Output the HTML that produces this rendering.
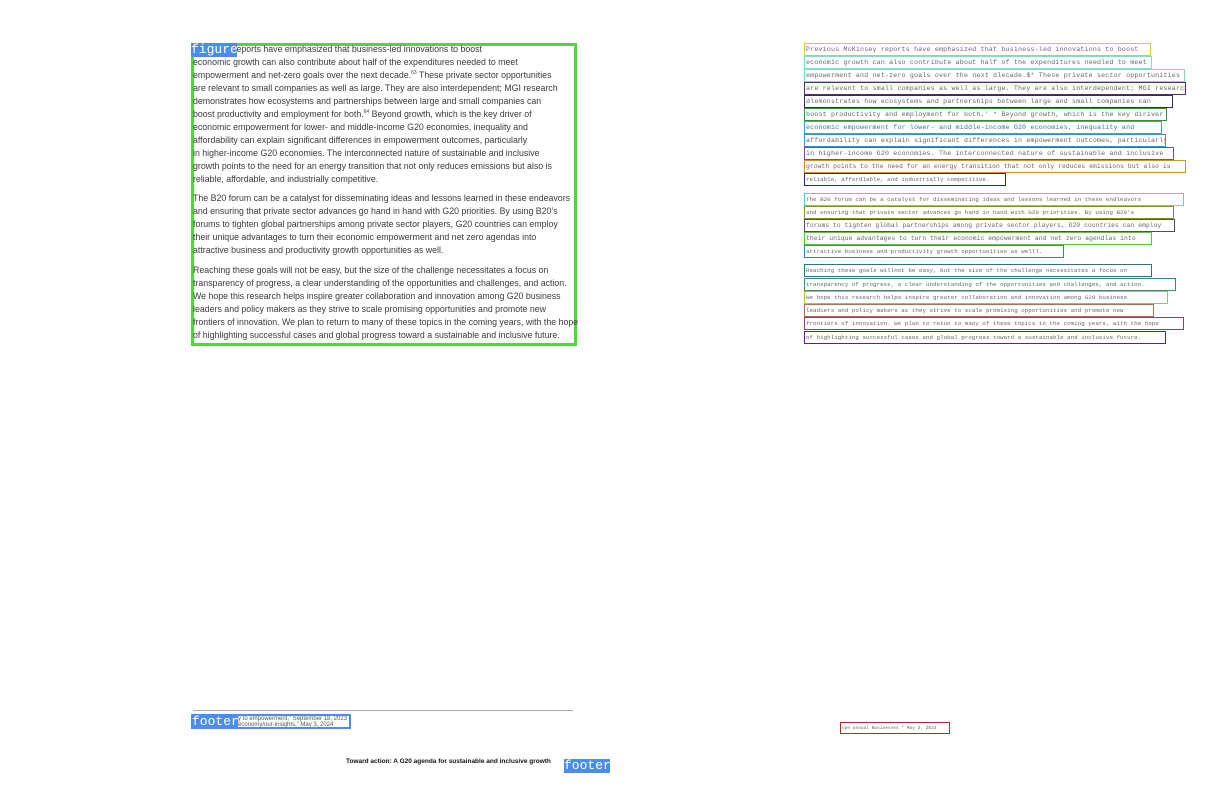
<!DOCTYPE html>
<html><head><meta charset="utf-8"><style>
body{margin:0;width:1224px;height:792px;background:#fff;position:relative;overflow:hidden}
.l{position:absolute;left:193px;font:8.8px/1 "Liberation Sans",sans-serif;color:#3a3a3a;white-space:nowrap}
.r{position:absolute;left:804px;height:13px;border:1px solid;box-sizing:border-box;font:6.6px/11px "Liberation Mono",monospace;letter-spacing:.2px;color:#666;white-space:nowrap;overflow:hidden;padding-left:1px}
.s{font-size:5.8px;letter-spacing:.05px}
.lab{position:absolute;background:#4a8cf0;color:#fff;font:13px/14px "Liberation Mono",monospace}
sup{font-size:5px}
</style></head><body>
<div style="position:absolute;left:191px;top:43px;width:386px;height:303px;border:3px solid #4ed83a;box-sizing:border-box"></div>
<div style="position:absolute;top:0;left:0">
<div class="l" style="top:45px">McKinsey reports have emphasized that business-led innovations to boost</div>
<div class="l" style="top:58px">economic growth can also contribute about half of the expenditures needed to meet</div>
<div class="l" style="top:71px">empowerment and net-zero goals over the next decade.<sup>63</sup> These private sector opportunities</div>
<div class="l" style="top:84px">are relevant to small companies as well as large. They are also interdependent; MGI research</div>
<div class="l" style="top:97px">demonstrates how ecosystems and partnerships between large and small companies can</div>
<div class="l" style="top:110px">boost productivity and employment for both.<sup>64</sup> Beyond growth, which is the key driver of</div>
<div class="l" style="top:123px">economic empowerment for lower- and middle-income G20 economies, inequality and</div>
<div class="l" style="top:136px">affordability can explain significant differences in empowerment outcomes, particularly</div>
<div class="l" style="top:149px">in higher-income G20 economies. The interconnected nature of sustainable and inclusive</div>
<div class="l" style="top:162px">growth points to the need for an energy transition that not only reduces emissions but also is</div>
<div class="l" style="top:175px">reliable, affordable, and industrially competitive.</div>
<div class="l" style="top:194px">The B20 forum can be a catalyst for disseminating ideas and lessons learned in these endeavors</div>
<div class="l" style="top:207px">and ensuring that private sector advances go hand in hand with G20 priorities. By using B20’s</div>
<div class="l" style="top:220px">forums to tighten global partnerships among private sector players, G20 countries can employ</div>
<div class="l" style="top:233px">their unique advantages to turn their economic empowerment and net zero agendas into</div>
<div class="l" style="top:246px">attractive business and productivity growth opportunities as well.</div>
<div class="l" style="top:266px">Reaching these goals will not be easy, but the size of the challenge necessitates a focus on</div>
<div class="l" style="top:279px">transparency of progress, a clear understanding of the opportunities and challenges, and action.</div>
<div class="l" style="top:292px">We hope this research helps inspire greater collaboration and innovation among G20 business</div>
<div class="l" style="top:305px">leaders and policy makers as they strive to scale promising opportunities and promote new</div>
<div class="l" style="top:318px">frontiers of innovation. We plan to return to many of these topics in the coming years, with the hope</div>
<div class="l" style="top:331px">of highlighting successful cases and global progress toward a sustainable and inclusive future.</div>
</div>
<div class="lab" style="left:191px;top:43px;width:46px;height:14px">figure</div>

<div style="position:absolute;left:193px;top:710px;width:380px;height:1px;background:#aaa"></div>
<div style="position:absolute;left:191px;top:714px;width:160px;height:15px;background:#4a8cf0"></div>
<div style="position:absolute;left:238px;top:716px;width:111px;height:11px;background:#fff;font:6px/6px 'Liberation Sans',sans-serif;color:#555;overflow:hidden;white-space:nowrap">y to empowerment,” September 18, 2023<br>economy/our-insights,” May 3, 2024</div>
<div class="lab" style="left:192px;top:715px;background:none">footer</div>
<div style="position:absolute;left:346px;top:758px;font:bold 6.5px 'Liberation Sans',sans-serif;color:#111;white-space:nowrap">Toward action: A G20 agenda for sustainable and inclusive growth</div>
<div class="lab" style="left:564px;top:759px;width:46px;height:14px">footer</div>

<div class="r" style="top:43px;width:347px;border-color:#d4c840">Previous McKinsey reports have emphasized that business-led innovations to boost</div>
<div class="r" style="top:56px;width:348px;border-color:#7ee0c8">economic growth can also contribute about half of the expenditures needled to meet</div>
<div class="r" style="top:69px;width:381px;border-color:#7ee0b0">empowerment and net-zero goals over the next dlecade.$* These private sector opportunities</div>
<div class="r" style="top:82px;width:382px;border-color:#4a3070">are relevant to small companies as well as large. They are also interdependent; MGI research</div>
<div class="r" style="top:95px;width:369px;border-color:#3a2a60">dlemonstrates how ecosystems and partnerships between large and small companies can</div>
<div class="r" style="top:108px;width:363px;border-color:#3a8a3a">boost productivity and employment for both.' * Beyond growth, which is the key diriver of</div>
<div class="r" style="top:121px;width:358px;border-color:#40a0c8">economic empowerment for lower- and middle-income G20 economies, inequality and</div>
<div class="r" style="top:134px;width:362px;border-color:#3890d0">affordability can explain significant differences in empowerment outcomes, particularly</div>
<div class="r" style="top:147px;width:370px;border-color:#7a4aa0">in higher-income G20 economies. The interconnected nature of sustainable and inclusive</div>
<div class="r" style="top:160px;width:382px;border-color:#d09030;font-size:6.3px;letter-spacing:.1px">growth points to the need for an energy transition that not only reduces emissions but also is</div>
<div class="r s" style="top:173px;width:202px;border-color:#202890">reliable, affordlable, and industrially competitive.</div>
<div class="r s" style="top:193px;width:380px;border-color:#50d8c0">The B20 forum can be a catalyst for disseminating ideas and lessons learned in these endleavors</div>
<div class="r s" style="top:206px;width:370px;border-color:#8a8a30">and ensuring that private sector advances go hand in hand with G20 priorities. By using B20's</div>
<div class="r" style="top:219px;width:371px;border-color:#505050;font-size:6.2px;letter-spacing:.15px">forums to tighten global partnerships among private sector players, G20 countries can employ</div>
<div class="r" style="top:232px;width:348px;border-color:#60c040;font-size:6.3px;letter-spacing:.1px">their unique advantages to turn their economic empowerment and net zero agendlas into</div>
<div class="r s" style="top:245px;width:260px;border-color:#3a80c0">attractive business and productivity growth opportunities as welll.</div>
<div class="r s" style="top:264px;width:348px;border-color:#2a7090">Reaching these goals willnot be easy, but the size of the challenge necessitates a focus on</div>
<div class="r s" style="top:278px;width:372px;border-color:#3a8a70">transparency of progress, a clear understanding of the opportunities and challenges, and action.</div>
<div class="r s" style="top:291px;width:364px;border-color:#a0c830">We hope this research helps inspire greater collaboration and innovation among G20 business</div>
<div class="r s" style="top:304px;width:350px;border-color:#b07050">leadiers and policy makers as they strive to scale promising opportunities and promote new</div>
<div class="r s" style="top:317px;width:380px;border-color:#904060">frontiers of innovation. We plan to retun to many of these topics in the coming years, with the hope</div>
<div class="r s" style="top:331px;width:362px;border-color:#602080">of highlighting successful cases and global progress toward a sustainable and inclusive future.</div>
<div class="r" style="left:840px;top:722px;width:110px;height:12px;border-color:#c02030;font-size:4.5px;letter-spacing:0">ope annual Businesses * May 3, 2024</div>
</body></html>
